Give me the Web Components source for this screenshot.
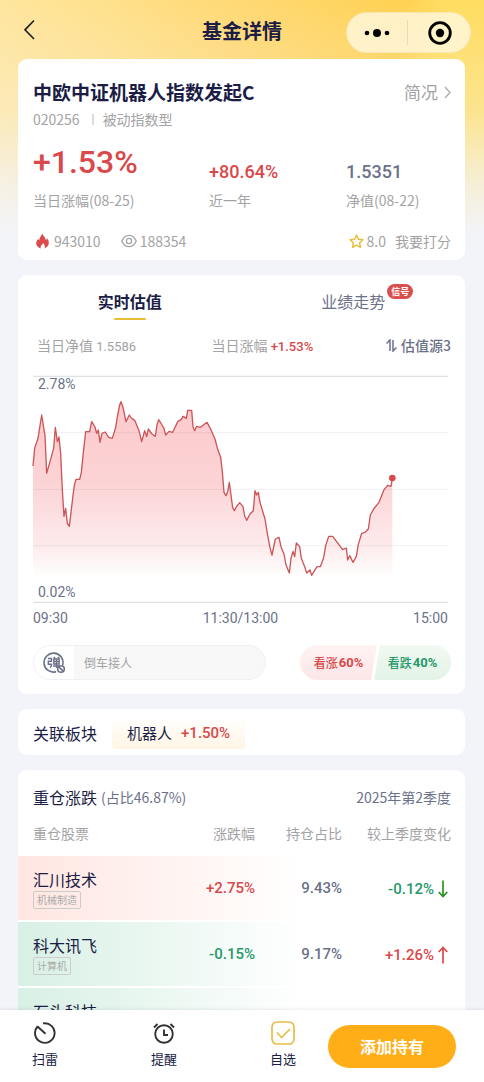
<!DOCTYPE html>
<html lang="zh-CN">
<head>
<meta charset="utf-8">
<meta name="viewport" content="width=device-width, initial-scale=1">
<title>基金详情</title>
<style>
  html, body { margin: 0; height: 100%; }
  body {
    --ink: #1b1d45;
    --slate: #6b7189;
    --muted: #a3a3a5;
    --red: #d9484a;
    --green: #25996a;
    --gold: #e6bd35;
    --page: #f3f4fa;
    --num: "Roboto", sans-serif;
    font-family: "Noto Sans CJK SC", "Noto Sans", sans-serif;
    font-size: 14px;
    line-height: 20px;
    color: var(--ink);
    background: var(--page);
  }
</style>
</head>
<body>
<fund-page>
  <app-header slot="header">基金详情</app-header>
  <content-card>
    <fund-summary>
      <stat-item size="large" tone="red" value="+1.53%">当日涨幅(08-25)</stat-item>
      <stat-item tone="red" value="+80.64%">近一年</stat-item>
      <stat-item tone="slate" value="1.5351">净值(08-22)</stat-item>
    </fund-summary>
  </content-card>
  <content-card>
    <valuation-tabs></valuation-tabs>
    <valuation-meta></valuation-meta>
    <valuation-chart></valuation-chart>
    <opinion-bar></opinion-bar>
  </content-card>
  <content-card><related-sector></related-sector></content-card>
  <content-card><holdings-table></holdings-table></content-card>
  <bottom-bar slot="footer"></bottom-bar>
</fund-page>

<script>
const base = `
  *, *::before, *::after { box-sizing: border-box; }
  :host { display: block; }
  :host([hidden]) { display: none; }
  button, input { font: inherit; color: inherit; border: 0; background: none; padding: 0; margin: 0; }
  button { cursor: pointer; }
  a { color: inherit; text-decoration: none; }
  svg { display: block; flex: none; }
  .num { font-family: var(--num); font-weight: 500; }
  .red { color: var(--red); }
  .green { color: var(--green); }
  .slate { color: var(--slate); }
`;

function define(name, css, html) {
  customElements.define(name, class extends HTMLElement {
    constructor() {
      super();
      const template = document.createElement('template');
      template.innerHTML = `<style>${base}${css}</style>${typeof html === 'function' ? html(this) : html}`;
      this.attachShadow({ mode: 'open' }).append(template.content.cloneNode(true));
    }
  });
}

define('fund-page', `
  :host {
    display: flex; flex-direction: column; height: 100vh;
    background:
      linear-gradient(180deg, rgba(243,244,250,0) 0, rgba(243,244,250,.3) 110px, rgba(243,244,250,.75) 180px, #f3f4fa 235px),
      linear-gradient(100deg, #ffe69e 0%, #ffd974 35%, #ffd152 60%, #ffdd60 66%, #ffdc5c 100%);
  }
  main {
    flex: 1; min-height: 0; overflow-y: auto; scrollbar-width: none;
    display: flex; flex-direction: column; gap: 15px; padding: 0 19px 15px 18px;
  }
  ::slotted(content-card) { flex: none; }
`, `<slot name="header"></slot><main><slot></slot></main><slot name="footer"></slot>`);

define('app-header', `
  :host { flex: none; }
  header { display: grid; grid-template-columns: 1fr auto 1fr; align-items: center; padding: 12px 13px 6px; }
  h1 { margin: 0; padding-bottom: 4px; font-size: 20px; line-height: 28px; font-weight: 700; }
  .back { justify-self: start; height: 28px; width: 34px; padding: 0 0 6px 7px; }
  .capsule {
    justify-self: end; display: flex; align-items: center; height: 41px; width: 125px;
    border-radius: 21px; background: rgba(255,248,224,.8); border: 1px solid rgba(240,214,140,.4);
  }
  .capsule button { flex: 1; display: grid; place-items: center; height: 39px; }
  .capsule button:last-child { padding-left: 3px; }
  .capsule i { width: 1px; height: 25px; background: #e8dcb6; }
`, `
  <header>
    <button class="back" aria-label="返回">
      <svg width="20" height="22" viewBox="0 0 20 22" fill="none" stroke="#222" stroke-width="1.7"><path d="M14 1.500 5 10.800 14 20"/></svg>
    </button>
    <h1><slot></slot></h1>
    <div class="capsule">
      <button aria-label="更多"><svg width="26" height="10" viewBox="0 0 26 10"><circle cx="3" cy="5" r="2.300"/><circle cx="13" cy="5" r="4"/><circle cx="23" cy="5" r="2.300"/></svg></button>
      <i></i>
      <button aria-label="关闭"><svg width="24" height="24" viewBox="0 0 24 24"><circle cx="12" cy="12" r="10.300" fill="none" stroke="#000" stroke-width="2.800"/><circle cx="12" cy="12" r="4.200"/></svg></button>
    </div>
  </header>
`);

define('content-card', `
  :host { background: #fff; border-radius: 9px; overflow: hidden; }
`, `<slot></slot>`);

define('fund-summary', `
  :host { padding: 19px 14px 9px 15px; color: var(--muted); }
  .row { display: flex; align-items: center; }
  h2 { margin: 0; flex: 1; font-size: 19px; line-height: 28px; font-weight: 700; color: var(--ink); }
  .more { display: flex; align-items: center; gap: 6px; font-size: 17px; line-height: 28px; }
  .code { margin-top: 3px; gap: 9px; }
  .code i { width: 2px; height: 11px; background: #dcdcde; margin-left: 3px; }
  .stats { display: grid; grid-template-columns: 176fr 137fr 105fr; align-items: end; margin-top: 13px; }
  .foot { margin-top: 21px; }
  .foot span { margin-left: 3px; }
  .foot .views { margin-left: 20px; }
  .foot .score { margin-left: auto; }
  .foot button { margin-left: 9px; }
`, `
  <div class="row"><h2>中欧中证机器人指数发起C</h2>
    <a class="more" href="#profile">简况<svg width="7" height="13" viewBox="0 0 7 13" fill="none" stroke="#aaa" stroke-width="1.300"><path d="m1 1 5 5.500-5 5.500"/></svg></a></div>
  <div class="row code"><span>020256</span><i></i><span>被动指数型</span></div>
  <div class="stats"><slot></slot></div>
  <div class="row foot">
    <svg width="18" height="16" viewBox="0 0 18 16"><path fill="#dc4a4b" d="M9.200.5c.5 2.200 3.400 3.900 3.700 6.600.8-.4 1-1.200 1.100-1.900 1.300 1.600 2.100 3.500 1.800 5.400-.4 2.400-2.100 4.100-4.300 4.800.9-1.900.2-3.700-1.500-5.500-.2 1-.8 1.500-1.400 2.200-.9 1-1.200 2.100-.8 3.300-2.500-.7-4.600-2.600-4.600-5.200 0-1.900 1-3.300 2-4.500.2.700.4 1.300 1 1.700C6.100 4.600 8.400 3.300 9.200.5z"/></svg>
    <span>943010</span>
    <svg class="views" width="16" height="14" viewBox="0 0 16 14" fill="none" stroke="#a3a3a5" stroke-width="1.300"><path d="M.8 7C4 -.6 12 -.6 15.200 7 12 14.600 4 14.600.8 7z"/><circle cx="8" cy="7" r="2.600"/></svg>
    <span>188354</span>
    <svg class="score" width="15" height="15" viewBox="0 0 15 15" fill="none" stroke="#e6bd35" stroke-width="1.400" stroke-linejoin="round"><path d="m7.500 1.100 1.900 4.100 4.500.6-3.300 3.100.9 4.500-4-2.200-4 2.200.9-4.500L1.100 5.800l4.500-.6z"/></svg>
    <span>8.0</span><button>我要打分</button>
  </div>
`);

define('stat-item', `
  .value { font-size: 18px; line-height: 20px; }
  :host([size=large]) .value { font-size: 32px; line-height: 40px; }
  .label { margin-top: 8px; white-space: nowrap; }
`, host => `<div class="value num ${host.getAttribute('tone')}">${host.getAttribute('value')}</div><div class="label"><slot></slot></div>`);

define('valuation-tabs', `
  nav { display: grid; grid-template-columns: 1fr 1fr; justify-items: center; padding-top: 14px; }
  button { position: relative; font-size: 16px; line-height: 24px; padding-bottom: 7px; color: var(--slate); }
  button[aria-selected=true] { font-weight: 700; color: var(--ink); }
  button[aria-selected=true]::after {
    content: ""; position: absolute; left: 50%; bottom: 0; width: 32px; margin-left: -16px;
    height: 2px; border-radius: 1px; background: var(--gold);
  }
  .badge {
    position: absolute; left: 100%; top: -5px; margin-left: 2px; padding: 0 4px; border-radius: 8px;
    background: #d94f50; color: #fff; font-size: 9px; line-height: 15px; font-weight: 700; white-space: nowrap;
  }
`, `<nav role="tablist">
  <button role="tab" aria-selected="true">实时估值</button>
  <button role="tab" aria-selected="false">业绩走势<span class="badge">信号</span></button>
</nav>`);

define('valuation-meta', `
  :host { padding: 15px 14px 21px 19px; color: var(--muted); }
  div { display: grid; grid-template-columns: 1fr 1fr auto; height: 20px; }
  .num { font-size: 13px; }
  .plain { font-weight: 400; }
  button { display: flex; align-items: center; gap: 4px; height: 20px; color: var(--slate); font-weight: 500; }
`, `<div>
  <span>当日净值 <span class="num plain">1.5586</span></span>
  <span>当日涨幅 <span class="num red">+1.53%</span></span>
  <button><svg width="11" height="13" viewBox="0 0 11 13" fill="none" stroke="#6b7189" stroke-width="1.500"><path d="M.6 4.500 4 1v11M7 1v11l3.400-3.500"/></svg>估值源3</button>
</div>`);

const trend = [
  [39,303],[44,250],[54,220],[65,150],[75,212],[80,325],[101,250],[106,187],[112,230],[117,216],[122,265],
  [127,375],[132,454],[137,430],[142,475],[148,484],[158,400],[163,360],[168,343],[179,343],[184,322],
  [190,262],[197,200],[209,200],[215,170],[225,186],[230,205],[235,195],[240,232],[246,205],[256,201],
  [266,217],[277,220],[287,187],[293,150],[299,120],[303,110],[309,127],[318,170],[328,150],[334,159],
  [344,166],[350,180],[357,197],[365,230],[374,197],[380,215],[385,192],[396,207],[406,214],[411,180],
  [416,164],[426,180],[432,190],[437,210],[447,199],[458,202],[473,170],[484,163],[489,154],[499,160],
  [503,136],[515,136],[519,185],[524,197],[530,184],[541,187],[561,172],[572,192],[586,225],[592,250],
  [602,277],[607,320],[612,382],[618,392],[623,380],[628,352],[633,390],[638,428],[643,437],[650,424],
  [659,413],[669,425],[674,453],[680,466],[690,447],[700,437],[705,377],[710,390],[715,382],[720,412],
  [735,462],[741,500],[750,548],[756,570],[766,522],[777,517],[783,545],[792,567],[798,600],[808,624],
  [813,580],[819,559],[824,575],[829,534],[839,545],[844,580],[854,605],[860,624],[870,615],[875,631],
  [891,605],[901,605],[911,578],[917,542],[926,514],[938,514],[968,554],[979,549],[983,585],[989,572],
  [999,592],[1009,574],[1015,538],[1025,505],[1035,502],[1045,492],[1051,450],[1061,432],[1077,412],
  [1092,374],[1103,361],[1113,364],[1117,340]
].map(p => p.join(' ')).join('L');

define('valuation-chart', `
  :host { padding: 0 17px 0 15px; font-family: Roboto, sans-serif; color: var(--slate); }
  figure { position: relative; margin: 0; }
  .plot { width: 100%; height: auto; overflow: visible; }
  .top, .low { position: absolute; left: 5px; line-height: 16px; }
  .top { top: 0; }
  .low { bottom: 3px; }
  .axis { display: flex; justify-content: space-between; padding-top: 5px; }
`, `<figure>
  <svg class="plot" viewBox="39 33 1245 681" role="img" aria-label="实时估值走势">
    <defs><linearGradient id="fade" gradientUnits="userSpaceOnUse" x1="0" y1="110" x2="0" y2="640">
      <stop offset="0" stop-color="#fdcacc"/><stop offset=".45" stop-color="#fcd3d5"/><stop offset=".82" stop-color="#fdebec"/><stop offset="1" stop-color="#fff"/></linearGradient></defs>
    <path d="M${trend}L1117 640 39 640z" fill="url(#fade)"/>
    <path d="M39 203h1245M39 373h1245M39 542h1245" stroke="#000" stroke-opacity=".06" stroke-width="3"/>
    <path d="M39 34h1245M39 712h1245" stroke="#dfe3e6" stroke-width="4"/>
    <path d="M${trend}" fill="none" stroke="#cd5558" stroke-width="4" stroke-linejoin="round"/>
    <circle cx="1117" cy="339" r="10" fill="#dc484b"/>
  </svg>
  <span class="top">2.78%</span><span class="low">0.02%</span>
</figure>
<div class="axis"><span>09:30</span><span>11:30/13:00</span><span>15:00</span></div>`);

define('opinion-bar', `
  :host { padding: 17px 14px 14px 15px; }
  .row { display: flex; justify-content: space-between; font-size: 12px; }
  .danmu {
    flex: 0 1 233px; display: flex; height: 35px; border: 1px solid #f0f0f0; border-radius: 18px;
    background: #f8f8f8; overflow: hidden;
  }
  .danmu button { flex: none; width: 40px; display: grid; place-items: center; background: #fff; }
  .danmu input { flex: 1; min-width: 0; padding: 0 10px; outline: 0; }
  .danmu input::placeholder { color: var(--muted); opacity: 1; }
  .votes { display: flex; flex: none; }
  .votes button { display: flex; align-items: center; justify-content: center; gap: 1px; height: 35px; width: 77px; font-weight: 500; }
  .up { color: var(--red); background: linear-gradient(#fff3f3, #fce6e7); border-radius: 18px 3px 3px 18px; clip-path: polygon(0 0, 100% 0, 92% 100%, 0 100%); }
  .down { color: var(--green); background: linear-gradient(#f1f9f2, #e3f3e7); border-radius: 3px 18px 18px 3px; clip-path: polygon(8% 0, 100% 0, 100% 100%, 0 100%); margin-left: -3px; }
  .votes .num { font-size: 13px; font-weight: 700; }
`, `<div class="row">
  <div class="danmu">
    <button aria-label="弹幕开关"><svg width="24" height="24" viewBox="0 0 24 24" fill="none" stroke="#6b7189" stroke-width="1.600">
      <path d="M20.800 13.500A9.500 9.500 0 1 0 13.500 20.900" stroke-linecap="round"/>
      <path d="M6 7.500h3.500v2.700H6.300v3H9.500c0 2-.3 3-1.700 3M12 6l1 1.500M17 6l-1 1.500M11.800 8h5.400v5h-5.400zM11.800 10.500h5.400M14.500 8v9M11 15h7" stroke-width="1.400"/>
      <circle cx="19" cy="18" r="3.300"/><path d="m16.800 15.900 4.400 4.200"/></svg></button>
    <input type="text" aria-label="发弹幕" placeholder="倒车接人">
  </div>
  <div class="votes">
    <button class="up">看涨<span class="num">60%</span></button>
    <button class="down">看跌<span class="num">40%</span></button>
  </div>
</div>`);

define('related-sector', `
  :host { padding: 7px 15px 6px; }
  div { display: flex; align-items: center; gap: 15px; font-size: 16px; }
  a { display: flex; align-items: center; gap: 9px; height: 33px; padding: 0 15px; font-size: 15px; border-radius: 4px; background: linear-gradient(#fff, #fff5e4); }
  .num { font-size: 15px; }
`, `<div><span>关联板块</span><a href="#sector">机器人<span class="num red">+1.50%</span></a></div>`);

const arrow = up => `<svg width="10" height="18" viewBox="0 0 10 18" fill="none" stroke="${up ? '#d9484a' : '#2f8f1f'}" stroke-width="1.700"><path d="${up ? 'M5 17.500V1.500M.7 6 5 1.500 9.300 6' : 'M5 .5v16M.7 12 5 16.500 9.300 12'}"/></svg>`;
const holdings = [
  ['汇川技术', '机械制造', '+2.75%', '9.43%', '-0.12%'],
  ['科大讯飞', '计算机', '-0.15%', '9.17%', '+1.26%'],
  ['石头科技', '家用电器', '-0.48%', '4.52%', '+0.31%']
];
const tone = v => v[0] === '+' ? 'red' : 'green';

define('holdings-table', `
  .head { display: flex; align-items: center; gap: 4px; padding: 15px 14px 0 15px; color: var(--slate); }
  h3 { margin: 0; font-size: 16px; line-height: 24px; font-weight: 400; color: var(--ink); }
  time { margin-left: auto; }
  table { width: 100%; table-layout: fixed; border-collapse: separate; border-spacing: 0; }
  .c2 { width: 87px; } .c3 { width: 87px; } .c4 { width: 123px; }
  th, td { padding: 0; text-align: right; font-weight: 400; }
  th { height: 47px; color: var(--muted); }
  th:first-child, td:first-child { text-align: left; padding-left: 15px; }
  th:last-child { padding-right: 14px; }
  td { height: 66px; border-bottom: 2px solid #fff; }
  td:last-child { padding-right: 17px; }
  td.num { font-size: 15px; font-weight: 500; }
  tr.red { background: linear-gradient(90deg, #ffe6e1, #fff 64%); }
  tr.green { background: linear-gradient(90deg, #d8f0e5, #fff 64%); }
  .name { display: block; font-size: 16px; line-height: 24px; color: var(--ink); padding-top: 2px; }
  .tag { display: inline-block; vertical-align: top; padding: 0 3px; border: 1px solid #ccc; border-radius: 2px; font-size: 10px; line-height: 16px; color: #aaa; }
  .change { display: inline-flex; align-items: center; gap: 4px; vertical-align: middle; }
`, `
  <div class="head"><h3>重仓涨跌</h3><span>(占比46.87%)</span><time>2025年第2季度</time></div>
  <table>
    <colgroup><col><col class="c2"><col class="c3"><col class="c4"></colgroup>
    <thead><tr><th>重仓股票</th><th>涨跌幅</th><th>持仓占比</th><th>较上季度变化</th></tr></thead>
    <tbody>${holdings.map(([name, tag, change, share, delta]) => `
      <tr class="${tone(change)}">
        <td><span class="name">${name}</span><span class="tag">${tag}</span></td>
        <td class="num ${tone(change)}">${change}</td>
        <td class="num slate">${share}</td>
        <td class="num ${tone(delta)}"><span class="change">${delta}${arrow(delta[0] === '+')}</span></td>
      </tr>`).join('')}</tbody>
  </table>
`);

define('bottom-bar', `
  :host { flex: none; background: #fff; box-shadow: 0 -1px 3px rgba(0,0,0,.08); position: relative; }
  footer { display: flex; align-items: center; gap: 19px; height: 72px; padding: 0 28px 0 19px; }
  nav { flex: 1; display: flex; justify-content: space-between; }
  nav button { width: 52px; display: flex; flex-direction: column; align-items: center; gap: 4px; padding-bottom: 2px; font-size: 13px; }
  .add { width: 128px; height: 43px; border-radius: 22px; background: #ffae18; color: #fff; font-size: 16px; font-weight: 700; }
`, `<footer>
  <nav>
    <button><svg width="24" height="24" viewBox="0 0 24 24" fill="none" stroke="#333" stroke-width="1.900"><path d="M10 2.400A9.800 9.800 0 1 1 4.500 5.500M4.200 5.200 12.500 12.700"/></svg>扫雷</button>
    <button><svg width="24" height="24" viewBox="0 0 24 24" fill="none" stroke="#333" stroke-width="1.900"><circle cx="12" cy="13" r="8.800"/><path d="M12 8.500V14h4M2 6.500 5.500 3M22 6.500 18.500 3"/></svg>提醒</button>
    <button><svg width="24" height="24" viewBox="0 0 24 24" fill="none" stroke="#e8bd45" stroke-width="1.700"><rect x="1" y="1" width="22" height="22" rx="5"/><path d="m6 11.500 4.500 5L19 8"/></svg>自选</button>
  </nav>
  <button class="add">添加持有</button>
</footer>`);
</script>
</body>
</html>
